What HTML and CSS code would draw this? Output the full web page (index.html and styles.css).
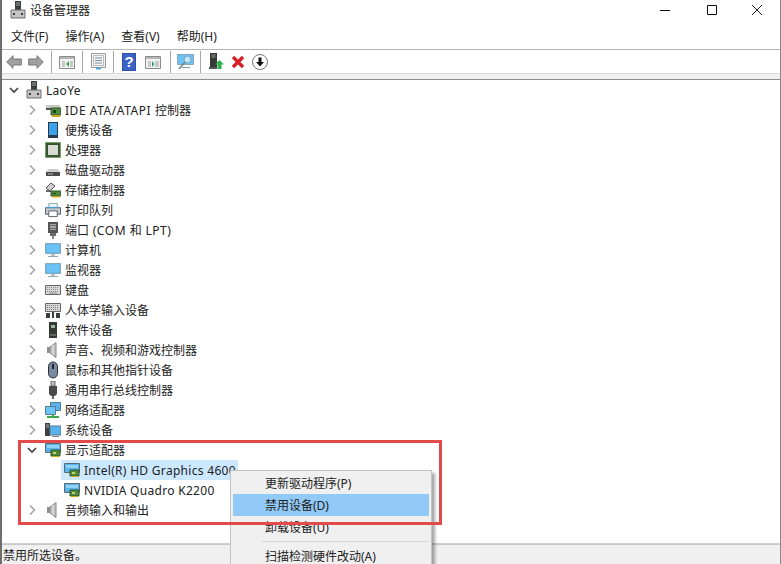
FILE: index.html
```html
<!DOCTYPE html>
<html lang="zh-CN">
<head>
<meta charset="utf-8">
<title>设备管理器</title>
<link rel="stylesheet" href="styles.css">
</head>
<body>
<svg class="defs" width="0" height="0">
  <defs>
    <symbol id="chev" viewBox="0 0 8 10"><path d="M2 .5L6.500 5 2 9.500" fill="none" stroke="#a6a6a6" stroke-width="1.6"/></symbol>
    <symbol id="chevd" viewBox="0 0 10 8"><path d="M1 2l4 4 4-4" fill="none" stroke="#404040" stroke-width="1.6"/></symbol>
    <symbol id="pc" viewBox="0 0 16 18"><path d="M5 0h6v9H5z" fill="#3a3f3c"/><path d="M6 2h4M6 4h4" stroke="#9aa29c"/><path d="M1 9h14v8H1z" fill="#c4c4c4" stroke="#6e6e6e"/><path d="M3 12h2v2H3zM11 12h2v2h-2z" fill="#3c3c3c"/></symbol>
    <symbol id="mon" viewBox="0 0 16 16"><path d="M.5 1.500h15v10H.5z" fill="#59b4ee" stroke="#8aa6b8"/><path d="M1.500 2.500h13v8h-13z" fill="#6cc3f5"/><path d="M6 12h4v2H6z" fill="#b8c4cc"/><path d="M3 14.500h10" stroke="#98a8b2"/></symbol>
    <symbol id="spk" viewBox="0 0 16 16"><path d="M2 5h3v6H2z" fill="#8e8e8e"/><path d="M5 5l6-4.500v15L5 11z" fill="#c2c2c2" stroke="#8a8a8a"/><path d="M8 3v10" stroke="#e6e6e6"/></symbol>
    <symbol id="card" viewBox="0 0 16 16"><path d="M.5 1.500h15v9H.5z" fill="#59b4ee" stroke="#5a6a74"/><path d="M2 3h12v3H2z" fill="#8ed2f8"/><path d="M6 8h9v6H6z" fill="#4f8a3c" stroke="#2f5a28"/><path d="M8 10h3v2H8z" fill="#c7d36a"/><path d="M7 14.500h7" stroke="#d6a520"/></symbol>
  </defs>
</svg>
<div class="window">
  <header class="titlebar">
    <div class="title-left">
      <svg class="title-ico" width="16" height="18"><use href="#pc"/></svg>
      <span class="title-text">设备管理器</span>
    </div>
    <div class="caption">
      <svg width="12" height="12" viewBox="0 0 12 12"><path d="M1 6.500h10" stroke="#111"/></svg>
      <svg width="12" height="12" viewBox="0 0 12 12"><path d="M1.500 1.500h9v9h-9z" fill="none" stroke="#111"/></svg>
      <svg width="12" height="12" viewBox="0 0 12 12"><path d="M1 1l10 10M11 1L1 11" stroke="#222"/></svg>
    </div>
  </header>
  <nav class="menubar">
    <span>文件(F)</span><span>操作(A)</span><span>查看(V)</span><span>帮助(H)</span>
  </nav>
  <div class="toolbar">
    <span class="tool"><svg width="16" height="14" viewBox="0 0 16 14"><path d="M.7 7l6.300-6.300v3.300h8.300v6H7v3.300z" fill="#a0a0a0" stroke="#777"/></svg></span>
    <span class="tool"><svg width="16" height="14" viewBox="0 0 16 14"><path d="M15.300 7L9 .7v3.300H.7v6H9v3.300z" fill="#a0a0a0" stroke="#777"/></svg></span>
    <i class="sep"></i>
    <span class="tool"><svg width="16" height="14" viewBox="0 0 16 14"><path d="M.5 1.500h15v12H.5z" fill="#f2f2f2" stroke="#8b8b8b"/><path d="M1 2h14v2H1z" fill="#b6b6b6"/><path d="M3 6h3v6H3zM11 6h3v6h-3z" fill="#c8c8c8"/><path d="M10 6v6L7 9z" fill="#3aa84a"/></svg></span>
    <i class="sep"></i>
    <span class="tool"><svg width="15" height="17" viewBox="0 0 15 17"><path d="M.5.500h14v14H.5z" fill="#f4f4f4" stroke="#9a9a9a"/><path d="M2.500 2.500h10v10h-10z" fill="none" stroke="#bbb"/><path d="M4 5h7M4 7.500h7M4 10h7" stroke="#7e8e9a"/><path d="M5 15.500h5" stroke="#4aa8e0" stroke-width="2"/></svg></span>
    <i class="sep"></i>
    <span class="tool"><svg width="14" height="18" viewBox="0 0 14 18"><path d="M0 0h14v18H0z" fill="#2e4fa8"/><path d="M1 1h12v16H1z" fill="#3c62c4"/><text x="7" y="14" text-anchor="middle" class="q">?</text></svg></span>
    <span class="tool wide"><svg width="16" height="14" viewBox="0 0 16 14"><path d="M.5 1.500h15v12H.5z" fill="#f2f2f2" stroke="#8b8b8b"/><path d="M1 2h14v2H1z" fill="#b6b6b6"/><path d="M3 6h3v6H3zM10 6h4v6h-4z" fill="#c8c8c8"/><path d="M7 6v6l2.500-3z" fill="#3aa84a"/></svg></span>
    <i class="sep after-wide"></i>
    <span class="tool"><svg width="17" height="16" viewBox="0 0 17 16"><path d="M.5.500h16v10H.5z" fill="#6cc3f5" stroke="#8aa6b8"/><path d="M5 13.500h8" stroke="#8a9aa4"/><circle cx="10.500" cy="5.500" r="3.500" fill="#bfe6fb" stroke="#7aa4bc"/><path d="M8 8l-6 7" stroke="#70808c" stroke-width="1.500"/></svg></span>
    <i class="sep"></i>
    <span class="tool"><svg width="16" height="17" viewBox="0 0 16 17"><path d="M2 0h7v14H2z" fill="#343a36"/><path d="M3.500 2h4M3.500 4h4" stroke="#8fa094"/><path d="M1 14h8v2H1z" fill="#555"/><path d="M11.500 7l4.500 4.500h-2.500V16h-4v-4.500H7z" fill="#2fae4e"/></svg></span>
    <span class="tool"><svg width="14" height="14" viewBox="0 0 14 14"><path d="M2 2l10 10M12 2L2 12" stroke="#d8202a" stroke-width="3.400"/></svg></span>
    <span class="tool"><svg width="16" height="16" viewBox="0 0 16 16"><circle cx="8" cy="8" r="7.500" fill="#fff" stroke="#777"/><path d="M6.500 3.500h3V8H12l-4 4.500L4 8h2.500z" fill="#111"/></svg></span>
  </div>
  <div class="toolstrip"></div>
  <main class="tree">
    <div class="row root">
      <svg class="chev-d" width="10" height="8"><use href="#chevd"/></svg>
      <svg class="ico" width="16" height="18"><use href="#pc"/></svg>
      <span class="label"><span class="lat">LaoYe</span></span>
    </div>
    <div class="row cat">
      <svg class="chev" width="8" height="10"><use href="#chev"/></svg>
      <svg class="ico" width="16" height="16" viewBox="0 0 16 16"><path d="M1 3h14v3H1z" fill="#c9c9c9"/><path d="M1 6h6v2H1z" fill="#555"/><path d="M6 6h10v7H6z" fill="#4f8a3c" stroke="#2f5a28"/><path d="M8 8h3v3H8z" fill="#1f3d1c"/><path d="M7 13h8v2H7z" fill="#d6a520"/></svg>
      <span class="label"><span class="lat-wide">IDE ATA/ATAPI </span>控制器</span>
    </div>
    <div class="row cat">
      <svg class="chev" width="8" height="10"><use href="#chev"/></svg>
      <svg class="ico" width="16" height="16" viewBox="0 0 16 16"><path d="M3 0h10v16H3z" fill="#2b3a48"/><path d="M4 1h8v12H4z" fill="#3ea2ea"/></svg>
      <span class="label">便携设备</span>
    </div>
    <div class="row cat">
      <svg class="chev" width="8" height="10"><use href="#chev"/></svg>
      <svg class="ico" width="16" height="16" viewBox="0 0 16 16"><path d="M.5.500h15v15H.5z" fill="#3f6a36" stroke="#5c7c30" stroke-dasharray="1 1"/><path d="M1.500 1.500h13v13h-13z" fill="#34502c"/><path d="M3 3h10v10H3z" fill="#d8dcd4"/></svg>
      <span class="label">处理器</span>
    </div>
    <div class="row cat">
      <svg class="chev" width="8" height="10"><use href="#chev"/></svg>
      <svg class="ico" width="16" height="16" viewBox="0 0 16 16"><path d="M3 7h10l2 3H1z" fill="#cfcfcf"/><path d="M1 10h14v4H1z" fill="#4a4a4a"/><path d="M3 12h5" stroke="#b8b8b8"/></svg>
      <span class="label">磁盘驱动器</span>
    </div>
    <div class="row cat">
      <svg class="chev" width="8" height="10"><use href="#chev"/></svg>
      <svg class="ico" width="16" height="16" viewBox="0 0 16 16"><path d="M1 6l5-5 4 3-5 5z" fill="#d0d0d0" stroke="#555"/><path d="M1 9h5" stroke="#666" stroke-width="2"/><path d="M6 9h10v5H6z" fill="#4f8a3c" stroke="#2f5a28"/><path d="M8 11h3v1H8z" fill="#1f3d1c"/><path d="M7 14h8v1.500H7z" fill="#d6a520"/></svg>
      <span class="label">存储控制器</span>
    </div>
    <div class="row cat">
      <svg class="chev" width="8" height="10"><use href="#chev"/></svg>
      <svg class="ico" width="16" height="16" viewBox="0 0 17 16"><path d="M4 1h9v5H4z" fill="#e8eef2" stroke="#8aa"/><path d="M.5 5.500h16v7H.5z" fill="#c4c8cc" stroke="#5a5f64"/><path d="M4 9h9v6H4z" fill="#fff" stroke="#5a5f64"/><path d="M2 5.500h13" stroke="#3ea2ea"/></svg>
      <span class="label">打印队列</span>
    </div>
    <div class="row cat">
      <svg class="chev" width="8" height="10"><use href="#chev"/></svg>
      <svg class="ico" width="16" height="18" viewBox="0 0 16 18"><path d="M3 1h10v11H3z" fill="#555"/><path d="M5 3h6v6H5z" fill="#a8a8a8"/><path d="M6 4v1M8 4v1M10 4v1M6 7v1M8 7v1M10 7v1" stroke="#222"/><path d="M5 12h6v3H5z" fill="#6a6a6a"/><path d="M7 15h2v3H7z" fill="#8a8a8a"/></svg>
      <span class="label">端口<span class="lat-wide"> (COM </span>和<span class="lat-wide"> LPT)</span></span>
    </div>
    <div class="row cat">
      <svg class="chev" width="8" height="10"><use href="#chev"/></svg>
      <svg class="ico" width="16" height="16"><use href="#mon"/></svg>
      <span class="label">计算机</span>
    </div>
    <div class="row cat">
      <svg class="chev" width="8" height="10"><use href="#chev"/></svg>
      <svg class="ico" width="16" height="16"><use href="#mon"/></svg>
      <span class="label">监视器</span>
    </div>
    <div class="row cat">
      <svg class="chev" width="8" height="10"><use href="#chev"/></svg>
      <svg class="ico" width="16" height="16" viewBox="0 0 16 16"><path d="M.5 3.500h15v9H.5z" fill="#d8d8d8" stroke="#666"/><path d="M2 5.500h12M2 7.500h12M2 9.500h12" stroke="#8e8e8e" stroke-dasharray="1 1"/><path d="M4 11h8" stroke="#8e8e8e"/></svg>
      <span class="label">键盘</span>
    </div>
    <div class="row cat">
      <svg class="chev" width="8" height="10"><use href="#chev"/></svg>
      <svg class="ico" width="16" height="16" viewBox="0 0 16 16"><path d="M.5 1.500h15v8H.5z" fill="#d8d8d8" stroke="#666"/><path d="M2 3.500h12M2 5.500h12M2 7.500h12" stroke="#7e7e7e" stroke-dasharray="1 1"/><path d="M1 11h4v5H1zM7 10h2v6H7zM11 11h4v5h-4z" fill="#3c3f42"/></svg>
      <span class="label">人体学输入设备</span>
    </div>
    <div class="row cat">
      <svg class="chev" width="8" height="10"><use href="#chev"/></svg>
      <svg class="ico" width="16" height="16" viewBox="0 0 16 16"><path d="M4 0h8v16H4z" fill="#343a36"/><path d="M6 3h4v3H6z" fill="#9ab8a0"/><path d="M5 12h6v2H5z" fill="#666"/></svg>
      <span class="label">软件设备</span>
    </div>
    <div class="row cat">
      <svg class="chev" width="8" height="10"><use href="#chev"/></svg>
      <svg class="ico" width="16" height="16"><use href="#spk"/></svg>
      <span class="label">声音、视频和游戏控制器</span>
    </div>
    <div class="row cat">
      <svg class="chev" width="8" height="10"><use href="#chev"/></svg>
      <svg class="ico" width="16" height="18" viewBox="0 0 16 18"><rect x="3.500" y="1" width="9" height="16" rx="4.500" fill="#7a8aa0" stroke="#2a3038"/><path d="M8 3v5" stroke="#20262e" stroke-width="2"/></svg>
      <span class="label">鼠标和其他指针设备</span>
    </div>
    <div class="row cat">
      <svg class="chev" width="8" height="10"><use href="#chev"/></svg>
      <svg class="ico" width="16" height="18" viewBox="0 0 16 18"><path d="M6 0h4v5H6z" fill="#bcbcbc" stroke="#666"/><path d="M4 5h8v8l-2 2H6l-2-2z" fill="#4a4a4a"/><path d="M7 15h2v3H7z" fill="#666"/></svg>
      <span class="label">通用串行总线控制器</span>
    </div>
    <div class="row cat">
      <svg class="chev" width="8" height="10"><use href="#chev"/></svg>
      <svg class="ico" width="16" height="16" viewBox="0 0 16 16"><path d="M5.500.500h10v8h-10z" fill="#59b4ee" stroke="#5a7a8e"/><path d="M.5 4.500h10v8H.5z" fill="#6cc3f5" stroke="#5a7a8e"/><path d="M2 15h12M8 12v3" stroke="#3aa84a" stroke-width="2"/></svg>
      <span class="label">网络适配器</span>
    </div>
    <div class="row cat">
      <svg class="chev" width="8" height="10"><use href="#chev"/></svg>
      <svg class="ico" width="16" height="16" viewBox="0 0 16 16"><path d="M0 1h5v13H0z" fill="#3c4044"/><path d="M1 3h3M1 5h3" stroke="#aaa"/><path d="M5 4h11v9H5z" fill="#59b4ee" stroke="#5a7a8e"/><path d="M7 14.500h7" stroke="#888"/></svg>
      <span class="label">系统设备</span>
    </div>
    <div class="row root-cat">
      <svg class="chev-d" width="10" height="8"><use href="#chevd"/></svg>
      <svg class="ico" width="16" height="16"><use href="#card"/></svg>
      <span class="label">显示适配器</span>
    </div>
    <div class="row dev selected">
      <svg class="ico" width="16" height="16"><use href="#card"/></svg>
      <span class="label"><span class="lat">Intel(R) HD Graphics 4600</span></span>
    </div>
    <div class="row dev">
      <svg class="ico" width="16" height="16"><use href="#card"/></svg>
      <span class="label"><span class="lat">NVIDIA Quadro K2200</span></span>
    </div>
    <div class="row cat">
      <svg class="chev" width="8" height="10"><use href="#chev"/></svg>
      <svg class="ico" width="16" height="16"><use href="#spk"/></svg>
      <span class="label">音频输入和输出</span>
    </div>
  </main>
  <footer class="status">禁用所选设备。</footer>
  <div class="menu">
    <div class="item">更新驱动程序(P)</div>
    <div class="item active">禁用设备(D)</div>
    <div class="item">卸载设备(U)</div>
    <div class="divider"></div>
    <div class="item">扫描检测硬件改动(A)</div>
  </div>
  <div class="annot"></div>
</div>
</body>
</html>
```
FILE: styles.css
```css
* { box-sizing: border-box; }
html, body { margin: 0; padding: 0; height: 100%; overflow: hidden; background: #fff; }
body { font-family: "Noto Sans", "Noto Sans CJK SC", sans-serif; font-size: 12px; color: #222; }
.defs { position: absolute; }
svg { display: block; flex: none; }
.window { position: relative; width: 781px; height: 564px; display: flex; flex-direction: column; border-left: 2px solid #6e6e6e; border-right: 1px solid #8a8a8a; overflow: hidden; }
.titlebar { height: 27px; display: flex; justify-content: space-between; align-items: center; padding: 0 17px 8px 8px; flex: none; }
.title-left { display: flex; align-items: center; gap: 4px; }
.title-text { font-size: 12px; height: 16px; line-height: 18px; }
.caption { display: flex; gap: 33px; }
.caption svg:first-child { margin-right: 2px; }
.menubar { height: 23px; display: flex; gap: 17px; align-items: center; padding: 0 0 4px 9px; border-bottom: 1px solid #b4b4b4; flex: none; }
.menubar span { height: 18px; line-height: 20px; }
.toolbar { height: 23px; display: flex; align-items: center; padding-left: 1px; background: #fff; flex: none; }
.toolstrip { height: 7px; flex: none; background: #f0f0f0; border-top: 1px solid #dcdcdc; border-bottom: 1px solid #8e8e8e; }
.tool { width: 22px; height: 22px; display: flex; align-items: center; justify-content: center; }
.tool.wide { margin-left: 2px; }
.sep { width: 1px; height: 22px; background: #a8a8a8; margin: 0 4px; flex: none; }
.sep.after-wide { margin-left: 6px; margin-right: 3px; }
.q { font: bold 15px "Liberation Sans", sans-serif; fill: #fff; }
.tree { flex: 1; min-height: 0; box-shadow: inset 0 -1px 0 #d0d0d0; }
.row { height: 20px; display: flex; align-items: center; }
.ico { margin-right: 4px; }
.label { height: 20px; line-height: 22px; white-space: nowrap; }
.lat { letter-spacing: .3px; }
.lat-wide { letter-spacing: .55px; }
.root { padding-left: 7px; }
.root .chev-d { margin-right: 7px; }
.cat { padding-left: 26px; }
.cat .chev { margin-right: 9px; }
.root-cat { padding-left: 25px; }
.root-cat .chev-d { margin-right: 8px; }
.dev { margin-left: 59px; padding-left: 3px; width: 177px; }
.selected { background: #cce8ff; }
.status { height: 20px; flex: none; line-height: 22px; padding-left: 1px; background: #f0f0f0; border-top: 1px solid #c8c8c8; }
.menu { position: absolute; left: 228px; top: 470px; width: 202px; height: 110px; background: #f0f0f0; border: 1px solid #c4c4c4; box-shadow: 3px 3px 3px rgba(0,0,0,.35); padding: 1px 2px; }
.item { height: 22px; line-height: 24px; padding-left: 32px; white-space: nowrap; }
.item.active { background: #91c9f7; }
.divider { height: 1px; background: #d8d8d8; margin: 3px 0 3px 29px; }
.annot { position: absolute; left: 16px; top: 440px; width: 424px; height: 85px; border: 3px solid #e34a4a; }
```
